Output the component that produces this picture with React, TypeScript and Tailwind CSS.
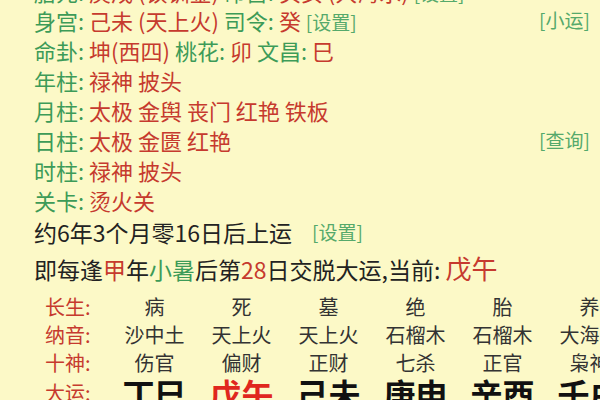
import type { ReactNode } from 'react'

const G = 'text-[#3d9b58]'
const R = 'text-[#c63a2e]'

function Label({ children }: { children: ReactNode }) {
  return <span className={G}>{children}: </span>
}

function Red({ children }: { children: ReactNode }) {
  return <span className={R}>{children}</span>
}

function Link({ children }: { children: ReactNode }) {
  return <span className="text-[19px] text-[#55a96b]">[{children}]</span>
}

function Line({ children, right, first }: { children: ReactNode; right?: ReactNode; first?: boolean }) {
  return (
    <div className={`flex items-center justify-between pr-[10px] ${first ? 'h-[27px]' : 'h-[30px]'}`}>
      <div className="whitespace-nowrap">{children}</div>
      {right}
    </div>
  )
}

const columns = [
  { sheng: '病', nayin: '沙中土', shishen: '伤官', yun: '丁巳' },
  { sheng: '死', nayin: '天上火', shishen: '偏财', yun: '戊午', now: true },
  { sheng: '墓', nayin: '天上火', shishen: '正财', yun: '己未' },
  { sheng: '绝', nayin: '石榴木', shishen: '七杀', yun: '庚申' },
  { sheng: '胎', nayin: '石榴木', shishen: '正官', yun: '辛酉' },
  { sheng: '养', nayin: '大海水', shishen: '枭神', yun: '壬戌' },
]

function TableRow({ label, cells, big }: { label: string; cells: ReactNode[]; big?: boolean }) {
  return (
    <div className="grid h-[28px] grid-cols-[66px_repeat(6,87px)] items-center whitespace-nowrap">
      <span className={`text-[20px] leading-none ${R}`}>{label}:</span>
      {cells.map((c, i) => (
        <span
          key={i}
          className={
            big
              ? 'text-center text-[32px] font-bold leading-none'
              : 'text-center text-[20px] leading-none text-[#333]'
          }
        >
          {c}
        </span>
      ))}
    </div>
  )
}

export default function App() {
  return (
    <div
      className="h-[400px] w-[600px] overflow-hidden bg-[#fcf9c7] text-[22px] text-[#222]"
      style={{ fontFamily: '"Noto Sans CJK SC", "Noto Sans", sans-serif' }}
    >
      <div className="-mt-[22px] pl-[34px]">
        <Line first>
          <Label>胎元</Label>
          <Red>庚戌 (钗钏金)</Red> <Label>命宫</Label>
          <Red>癸亥 (大海水)</Red> <Link>设置</Link>
        </Line>
        <Line right={<Link>小运</Link>}>
          <Label>身宫</Label>
          <Red>己未 (天上火)</Red> <Label>司令</Label>
          <Red>癸</Red> <Link>设置</Link>
        </Line>
        <Line>
          <Label>命卦</Label>
          <Red>坤(西四)</Red> <Label>桃花</Label>
          <Red>卯</Red> <Label>文昌</Label>
          <Red>巳</Red>
        </Line>
        <Line>
          <Label>年柱</Label>
          <Red>禄神 披头</Red>
        </Line>
        <Line>
          <Label>月柱</Label>
          <Red>太极 金舆 丧门 红艳 铁板</Red>
        </Line>
        <Line right={<Link>查询</Link>}>
          <Label>日柱</Label>
          <Red>太极 金匮 红艳</Red>
        </Line>
        <Line>
          <Label>时柱</Label>
          <Red>禄神 披头</Red>
        </Line>
        <Line>
          <Label>关卡</Label>
          <Red>烫火关</Red>
        </Line>

        <div className="flex h-[34px] items-center gap-[20px] whitespace-nowrap text-[23px]">
          <span>约6年3个月零16日后上运</span>
          <Link>设置</Link>
        </div>
        <div className="flex h-[36px] items-center whitespace-nowrap text-[23px]">
          <span>
            即每逢<Red>甲</Red>年<span className={G}>小暑</span>后第<Red>28</Red>日交脱大运,当前:{' '}
            <span className={`text-[26px] ${R}`}>戊午</span>
          </span>
        </div>
      </div>

      <div className="mt-[8px] pl-[45px]">
        <TableRow label="长生" cells={columns.map((c) => c.sheng)} />
        <TableRow label="纳音" cells={columns.map((c) => c.nayin)} />
        <TableRow label="十神" cells={columns.map((c) => c.shishen)} />
        <TableRow
          label="大运"
          big
          cells={columns.map((c) => (
            <span className={c.now ? 'text-[#e0271e]' : 'text-[#111]'}>{c.yun}</span>
          ))}
        />
      </div>
    </div>
  )
}
